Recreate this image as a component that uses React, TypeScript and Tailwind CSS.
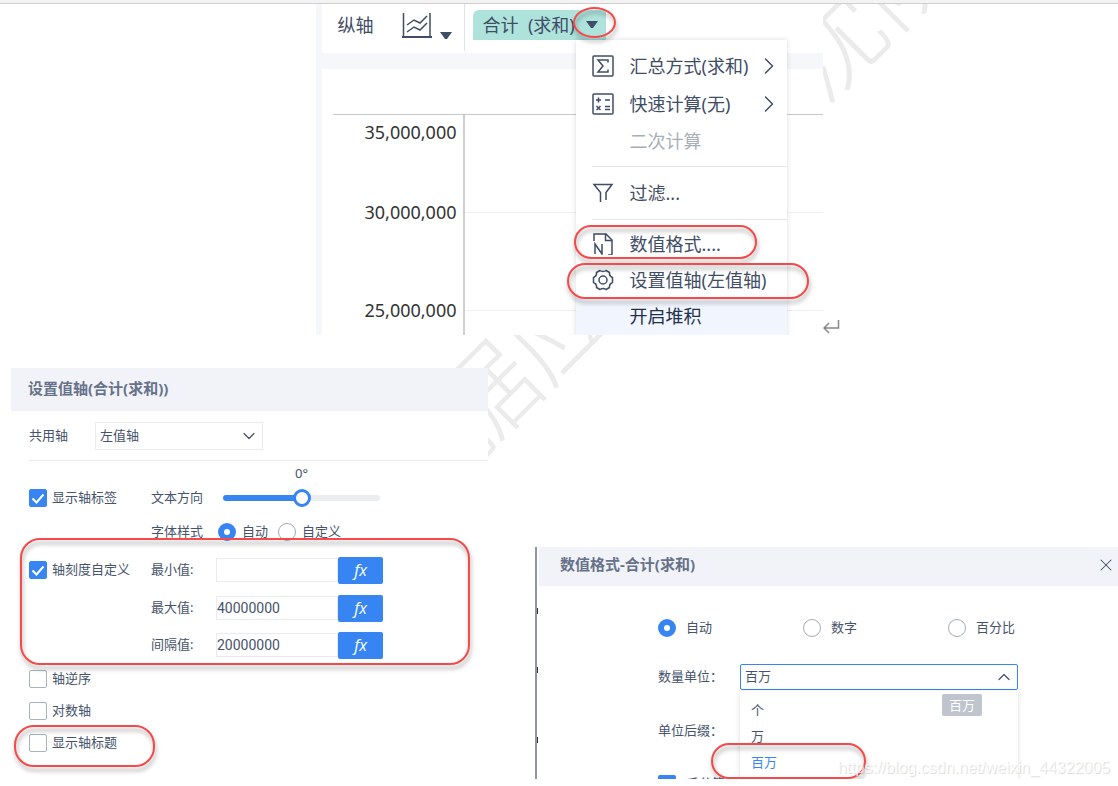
import type { ReactNode } from 'react';
import { ChevronDown, ChevronRight, ChevronUp, X } from 'lucide-react';

const radioClass =
  'size-[18px] shrink-0 appearance-none rounded-full border border-[#a3abb8] bg-white checked:border-[6px] checked:border-[#3685f2]';

// Red outline drawn round the settings being explained
const Highlight = ({ className }: { className: string }) => (
  <div
    className={`pointer-events-none absolute z-10 border-2 border-[#f64a4a] drop-shadow-[1px_4px_2px_rgba(0,0,0,0.35)] ${className}`}
  />
);

const Watermark = ({ text, className }: { text: string; className: string }) => (
  <div
    aria-hidden="true"
    className={`pointer-events-none absolute -rotate-45 text-[100px] leading-none font-light whitespace-nowrap text-[#ebebeb] ${className}`}
  >
    {text}
  </div>
);

const LineChartIcon = () => (
  <svg width="30" height="28" viewBox="0 0 30 28" fill="none" stroke="#3f4d66" strokeWidth="2">
    <path d="M1.500 1v25M28 1v25" strokeWidth="1.500" />
    <path d="M0 25h30" />
    <path d="M5 13l7-5 6 3 7-7M5 20l7-5 6 3 7-7" strokeWidth="1.500" />
  </svg>
);

const Caret = () => (
  <svg width="12" height="8" viewBox="0 0 12 8" fill="#3f4d66">
    <path d="M0 0h12L7 7H5z" />
  </svg>
);

const SumIcon = () => (
  <svg width="22" height="22" viewBox="0 0 22 22" fill="none" stroke="#3f4d66" strokeWidth="1.500">
    <rect x="1" y="1" width="20" height="20" rx="1" />
    <path d="M16 7.500V5H6l5 6-5 6h10v-2.500" />
  </svg>
);

const CalcIcon = () => (
  <svg width="22" height="22" viewBox="0 0 22 22" fill="none" stroke="#3f4d66" strokeWidth="1.500">
    <rect x="1" y="1" width="20" height="20" rx="1" />
    <path d="M4 7h5M6.500 4.500v5M13 7h5M4.500 13l4 4M8.500 13l-4 4M13 13.500h5M13 16.500h5" />
  </svg>
);

const FilterIcon = () => (
  <svg width="22" height="22" viewBox="0 0 22 22" fill="none" stroke="#3f4d66" strokeWidth="1.500">
    <path d="M8.500 20v-9.500L2 2.500h18l-6 8V18" />
  </svg>
);

const NumberFormatIcon = () => (
  <svg width="22" height="22" viewBox="0 0 22 22" fill="none" stroke="#3f4d66" strokeWidth="1.500">
    <path d="M2 8V1h12l6 6v15h-4" />
    <path d="M13.500 1v6.500H20M3 21V11l7 10V11" />
  </svg>
);

const GearIcon = () => (
  <svg width="22" height="22" viewBox="0 0 22 22" fill="none" stroke="#3f4d66" strokeWidth="1.500">
    <path d="M8 1.500Q11 3.500 14 1.500L17.500 3.500Q17 7 20.500 8.500V13.500Q17 15 17.500 18.500L14 20.500Q11 18.500 8 20.500L4.500 18.500Q5 15 1.500 13.500V8.500Q5 7 4.500 3.500Z" />
    <circle cx="11" cy="11" r="4" />
  </svg>
);

const MenuItem = ({
  icon,
  label,
  className = 'h-9',
  arrow,
  disabled,
}: {
  icon?: ReactNode;
  label: string;
  className?: string;
  arrow?: boolean;
  disabled?: boolean;
}) => (
  <button
    type="button"
    disabled={disabled}
    className={`flex w-full items-center gap-4 pl-4 text-left disabled:text-[#a9afb9] ${className}`}
  >
    <span className="w-[22px] shrink-0">{icon}</span>
    <span className="flex-1 whitespace-nowrap">{label}</span>
    {arrow && <ChevronRight size={28} strokeWidth={1.25} className="mr-1 -ml-4 shrink-0" />}
  </button>
);

const ChartPanel = () => (
  <section className="relative h-[331px] w-[507px] overflow-hidden border-l-[6px] border-[#f6f7fa] bg-white text-lg text-[#3f4d66]">
    <div className="flex h-[49px] pl-4">
      <span className="flex h-[41px] items-center">纵轴</span>
      <button type="button" aria-label="图表类型" className="ml-7 flex h-[43px] items-center gap-2">
        <LineChartIcon />
        <span className="mt-5">
          <Caret />
        </span>
      </button>
      <div className="ml-3 h-[47px] border-l border-[#e0e2e6] pt-1.5 pl-2">
        <button
          type="button"
          className="relative flex h-[30px] w-[133px] items-center justify-between rounded-tl-md bg-[#aee3dc] pr-2 pl-2.5 whitespace-pre"
        >
          合计{'  '}(求和)
          <Caret />
          <Highlight className="-top-[3px] left-[100px] h-[31px] w-[43px] rounded-[50%]" />
        </button>
      </div>
    </div>
    <div className="h-4 bg-[#f6f7fa]" />
    <div className="pt-[45px] pl-[11px]">
      <div className="flex border-t border-[#c8c8c8]">
        <div className="flex h-[221px] w-[132px] flex-col border-r-2 border-[#cfcfcf] pt-[5px] pr-1.5 text-right leading-6 text-[#333]">
          <span>35,000,000</span>
          <span className="mt-14">30,000,000</span>
          <span className="mt-[74px]">25,000,000</span>
        </div>
        <div className="flex-1">
          <div className="h-[98px] border-b border-[#f0f0f0]" />
          <div className="h-[98px] border-b border-[#f0f0f0]" />
        </div>
      </div>
    </div>

    <div className="absolute top-9 left-[254px] w-[211px] bg-white pt-[7px] shadow-[0_0_5px_rgba(0,0,0,0.15)]">
      <MenuItem icon={<SumIcon />} label="汇总方式(求和)" className="h-[38px]" arrow />
      <MenuItem icon={<CalcIcon />} label="快速计算(无)" className="h-[38px]" arrow />
      <MenuItem label="二次计算" disabled />
      <hr className="mt-[7px] ml-4 border-[#e6e6e6]" />
      <MenuItem icon={<FilterIcon />} label="过滤..." className="h-[52px]" />
      <hr className="mb-1.5 ml-4 border-[#e6e6e6]" />
      <div className="relative">
        <MenuItem icon={<NumberFormatIcon />} label="数值格式...." />
        <Highlight className="-top-px -left-0.5 h-[34px] w-[183px] rounded-full" />
      </div>
      <div className="relative">
        <MenuItem icon={<GearIcon />} label="设置值轴(左值轴)" />
        <Highlight className="top-px -left-[9px] h-9 w-[242px] rounded-full" />
      </div>
      <MenuItem label="开启堆积" className="h-10 bg-[#f1f6fe] pb-1 text-[#22304a]" />
    </div>
  </section>
);

const Check = ({ label, checked }: { label: string; checked?: boolean }) => (
  <label className="flex w-[122px] shrink-0 items-center gap-[5px]">
    <span className="relative flex">
      <input
        type="checkbox"
        defaultChecked={checked}
        className="size-[18px] appearance-none rounded-xs border border-[#a9b2c0] bg-white checked:border-[#3685f2] checked:bg-[#3685f2]"
      />
      {checked && (
        <svg className="absolute inset-0" width="18" height="18" fill="none" stroke="#fff" strokeWidth="2">
          <path d="M3.500 9.500l4 4 7-8" />
        </svg>
      )}
    </span>
    {label}
  </label>
);

const ValueField = ({ id, label, value }: { id: string; label: string; value: string }) => (
  <>
    <label htmlFor={id} className="w-[65px] shrink-0">
      {label}
    </label>
    <input
      id={id}
      type="text"
      defaultValue={value}
      className="h-6 w-[122px] border border-[#e9ebf0] font-[Roboto] text-sm outline-none"
    />
    <button
      type="button"
      className="h-[27px] w-[45px] rounded-xs bg-[#3685f2] font-['Open_Sans'] text-base leading-none text-white italic"
    >
      fx
    </button>
  </>
);

const AxisPanel = () => (
  <section className="mt-[33px] w-[477px] shrink-0 self-start bg-white text-[13px] text-[#46536b]">
    <h2 className="flex h-[43px] items-center bg-[#f2f3f8] pb-0.5 pl-[17px] text-[15px] font-bold text-[#66728a]">
      设置值轴(合计(求和))
    </h2>
    <div className="pl-[18px]">
      <div className="flex h-[50px] items-center border-b border-[#e9ebf0]">
        <label htmlFor="axis" className="w-[66px]">
          共用轴
        </label>
        <div className="relative">
          <select
            id="axis"
            className="block h-7 w-[168px] appearance-none border border-[#e9ebf0] bg-white pl-1 outline-none"
          >
            <option>左值轴</option>
          </select>
          <ChevronDown size={20} strokeWidth={1.5} className="pointer-events-none absolute top-1 right-1" />
        </div>
      </div>

      <div className="mt-0.5 pl-[194px]">
        <output htmlFor="angle" className="block w-[157px] text-center leading-5">
          0°
        </output>
      </div>
      <div className="flex h-[30px] items-center">
        <Check label="显示轴标签" checked />
        <label htmlFor="angle" className="w-[72px]">
          文本方向
        </label>
        <input
          id="angle"
          type="range"
          min={-90}
          max={90}
          defaultValue={0}
          className="h-1.5 w-[157px] appearance-none rounded-full bg-linear-to-r from-[#3685f2] from-50% to-[#ebedf1] to-50% [&::-webkit-slider-thumb]:size-[18px] [&::-webkit-slider-thumb]:appearance-none [&::-webkit-slider-thumb]:rounded-full [&::-webkit-slider-thumb]:border-[3px] [&::-webkit-slider-thumb]:border-[#3685f2] [&::-webkit-slider-thumb]:bg-white"
        />
      </div>
      <fieldset className="flex h-[38px] items-center pl-[122px]">
        <span className="w-[67px]">字体样式</span>
        <label className="mr-2.5 flex items-center gap-1.5">
          <input type="radio" name="font" defaultChecked className={radioClass} />
          自动
        </label>
        <label className="flex items-center gap-1.5">
          <input type="radio" name="font" className={radioClass} />
          自定义
        </label>
      </fieldset>

      <div className="relative">
        <div className="flex h-[38px] items-center">
          <Check label="轴刻度自定义" checked />
          <ValueField id="min" label="最小值:" value="" />
        </div>
        <div className="flex h-[38px] items-center pl-[122px]">
          <ValueField id="max" label="最大值:" value="40000000" />
        </div>
        <div className="flex h-9 items-center pl-[122px]">
          <ValueField id="step" label="间隔值:" value="20000000" />
        </div>
        <Highlight className="-top-[13px] -left-[9px] h-[127px] w-[450px] rounded-[20px]" />
      </div>

      <div className="flex h-8 items-center">
        <Check label="轴逆序" />
      </div>
      <div className="flex h-8 items-center">
        <Check label="对数轴" />
      </div>
      <div className="relative flex h-8 items-center">
        <Check label="显示轴标题" />
        <Highlight className="-top-0.5 -left-[15px] h-[42px] w-[141px] rounded-[20px]" />
      </div>
    </div>
  </section>
);

const formats = ['自动', '数字', '百分比'];

const FormatPanel = () => (
  <section className="relative mt-[212px] h-[232px] flex-1 overflow-hidden border-l-2 border-[#8f97a5] bg-white text-[13px] text-[#46536b]">
    <header className="ml-0.5 flex h-[39px] items-center justify-between bg-[#f2f3f8] pr-0.5 pb-1 pl-[21px]">
      <h2 className="text-[15px] font-bold text-[#66728a]">数值格式-合计(求和)</h2>
      <button type="button" aria-label="关闭">
        <X size={20} strokeWidth={1.25} />
      </button>
    </header>
    {/* ends of the axis labels behind the dialog */}
    <div className="absolute top-[61px] left-0 h-1.5 w-px bg-[#333]" />
    <div className="absolute top-[120px] left-0 h-1.5 w-px bg-[#333]" />
    <div className="absolute top-[190px] left-0 h-1.5 w-px bg-[#333]" />

    <div className="pt-6 pl-[121px]">
      <fieldset className="flex h-9 items-center">
        {formats.map((name, i) => (
          <label key={name} className="flex w-[145px] items-center gap-2.5">
            <input type="radio" name="format" defaultChecked={i === 0} className={radioClass} />
            {name}
          </label>
        ))}
      </fieldset>
      <div className="mt-[18px] flex items-center">
        <label htmlFor="unit" className="w-[82px]">
          数量单位：
        </label>
        <div className="relative">
          <select
            id="unit"
            defaultValue="百万"
            className="block h-[26px] w-[278px] appearance-none rounded-xs border border-[#3685f2] bg-white pl-1 outline-none"
          >
            <option>个</option>
            <option>万</option>
            <option>百万</option>
          </select>
          <ChevronUp size={20} strokeWidth={1.5} className="pointer-events-none absolute top-[3px] right-1" />
          <ul className="absolute top-[27px] left-0 w-full bg-white py-1.5 pl-[11px] leading-[26px] shadow-[0_1px_5px_rgba(0,0,0,0.15)]">
            <li>个</li>
            <li>万</li>
            <li className="text-[#3685f2]">百万</li>
          </ul>
          <span className="absolute top-[30px] left-[202px] rounded-xs bg-[#c0c5cd] px-[7px] leading-[22px] text-white">
            百万
          </span>
          <Highlight className="top-[79px] -left-[29px] h-9 w-[155px] rounded-full" />
        </div>
      </div>
      <div className="mt-[30px] leading-5">单位后缀：</div>
      <label className="mt-[34px] flex items-center gap-2.5">
        <input type="checkbox" defaultChecked className="size-[18px] appearance-none rounded-xs bg-[#3685f2]" />
        千分符
      </label>
    </div>
  </section>
);

const App = () => {
  return (
    <main className="relative min-h-screen overflow-hidden bg-white font-['Noto_Sans','Noto_Sans_CJK_SC',sans-serif]">
      <Watermark text="据应" className="top-[310px] left-[420px]" />
      <Watermark text="沈队" className="-top-[42px] left-[766px]" />
      <div className="relative h-1 border-b border-[#cfcfcf] bg-[#f3f3f3]" />
      <div className="relative flex items-end justify-center pl-10">
        <ChartPanel />
        <svg className="-mb-0.5" width="20" height="20" fill="none" stroke="#888" strokeWidth="1.500">
          <path d="M15.500 3v8H1M6 6l-5 5 5 5" />
        </svg>
      </div>
      <div className="relative -mt-0.5 flex gap-[47px] pt-0.5 pl-[11px]">
        <AxisPanel />
        <FormatPanel />
      </div>
      <p className="absolute right-2 bottom-2 z-20 font-['Liberation_Sans'] text-base leading-5 text-white/80 [text-shadow:1px_1px_1px_rgba(0,0,0,0.15)]">
        https://blog.csdn.net/weixin_44322005
      </p>
    </main>
  );
};

export default App;
